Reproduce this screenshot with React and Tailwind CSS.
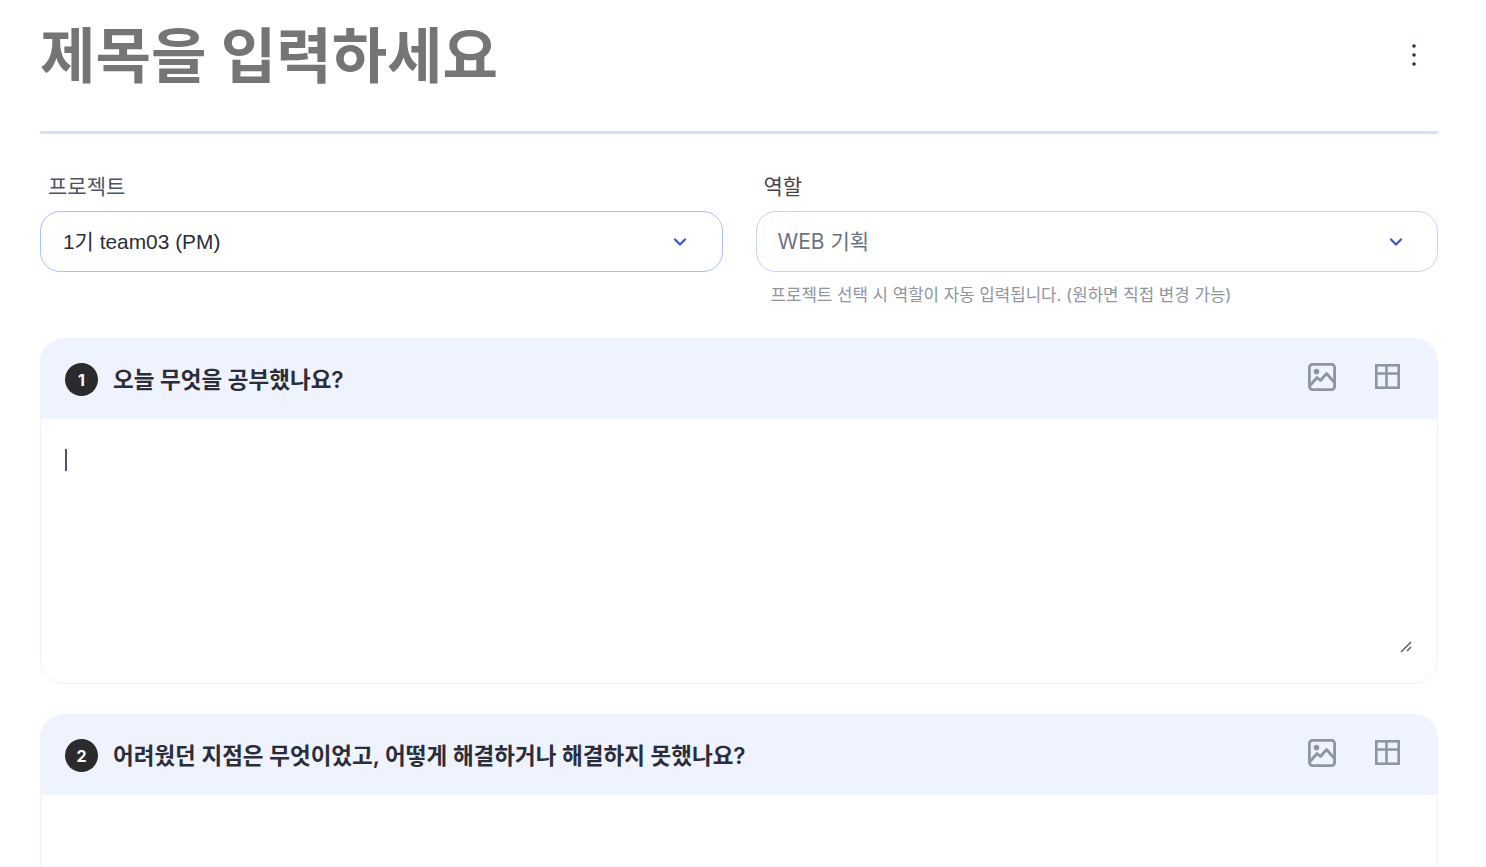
import React from "react";
import { ChevronDown } from "lucide-react";

const ImageIcon = () => (
  <svg width="30" height="30" viewBox="0 0 30 30" fill="none" stroke="#8d97a3" strokeWidth="2.8" strokeLinejoin="round" strokeLinecap="round">
    <rect x="2.4" y="2.4" width="25.2" height="25.2" rx="3" />
    <circle cx="9.5" cy="9.6" r="2.8" fill="#8d97a3" stroke="none" />
    <path d="M3.5 23 L10 15.5 L13.5 18.5 L19.5 11.5 L27 20" />
  </svg>
);

const TableIcon = () => (
  <svg width="25" height="25" viewBox="0 0 25 25" fill="none" stroke="#8d97a3" strokeWidth="2.6">
    <rect x="1.3" y="1.3" width="22.4" height="22.4" />
    <path d="M1 9.5 H24 M11.5 1 V24" />
  </svg>
);

const Section = ({ num, title, children }) => (
  <div className="mb-[30px] rounded-[24px] border border-[#eef2fd] overflow-hidden bg-white">
    <div className="h-[80px] bg-[#eff3fe] flex items-center pl-6 pr-[37px]">
      <span className="w-[33px] h-[33px] rounded-full bg-[#2b2b2e] text-white text-[16px] font-bold flex items-center justify-center mr-[15px] mt-px">{num}</span>
      <span className="text-[22.5px] font-semibold text-[#2b2d38] flex-1 mt-[2px]">{title}</span>
      <div className="flex items-center gap-[38px] -mt-[5px]">
        <ImageIcon />
        <TableIcon />
      </div>
    </div>
    {children}
  </div>
);

export default function App() {
  return (
    <div className="h-[867px] overflow-hidden bg-white pl-10 pr-[48px] font-['Inter','Noto_Sans_CJK_KR',sans-serif]">
      <div className="h-[134px] border-b-[3px] border-[#d5e0fb] flex items-start justify-between">
        <h1 className="text-[60.3px] leading-[114px] font-bold text-[#757575]">제목을 입력하세요</h1>
        <svg className="mt-[43px] mr-[22px]" width="4" height="24" viewBox="0 0 4 24" fill="#26315c">
          <circle cx="2" cy="3" r="1.8" />
          <circle cx="2" cy="12" r="1.8" />
          <circle cx="2" cy="21" r="1.8" />
        </svg>
      </div>

      <div className="mt-[39px] flex gap-[33px]">
        <div className="flex-1">
          <div className="pl-2 text-[21px] leading-[28px] text-[#4b5563] mb-[10px]">프로젝트</div>
          <div className="h-[61px] rounded-[20px] border border-[#a9c0f8] flex items-center justify-between pl-[22px] pr-[32px] text-[20.9px] text-[#2b2d38] font-['Liberation_Sans','Noto_Sans_CJK_KR',sans-serif]">
            1기 team03 (PM)
            <ChevronDown size={20} strokeWidth={2.6} className="text-[#3558c4]" />
          </div>
        </div>
        <div className="flex-1">
          <div className="pl-2 text-[21px] leading-[28px] text-[#444] mb-[10px]">역할</div>
          <div className="h-[61px] rounded-[20px] border border-[#c3d2fa] flex items-center justify-between pl-[21px] pr-[31px] text-[21px] text-[#6b7280]">
            WEB 기획
            <ChevronDown size={20} strokeWidth={2.6} className="text-[#3558c4]" />
          </div>
          <p className="mt-[12px] pl-[15px] text-[16.8px] leading-[22px] text-[#8f959e]">프로젝트 선택 시 역할이 자동 입력됩니다. (원하면 직접 변경 가능)</p>
        </div>
      </div>

      <div className="mt-[32px]">
        <Section num="1" title="오늘 무엇을 공부했나요?">
          <div className="h-[264px] relative">
            <span className="absolute left-[24px] top-[30px] w-[2px] h-[22px] bg-[#4b5563]" />
            <svg className="absolute right-[25px] bottom-[30px]" width="12" height="12" viewBox="0 0 12 12" stroke="#555" strokeWidth="1.4">
              <path d="M1 11 L11 1 M7 10 L11 6" />
            </svg>
          </div>
        </Section>
        <Section num="2" title="어려웠던 지점은 무엇이었고, 어떻게 해결하거나 해결하지 못했나요?">
          <div className="h-[264px]" />
        </Section>
      </div>
    </div>
  );
}
